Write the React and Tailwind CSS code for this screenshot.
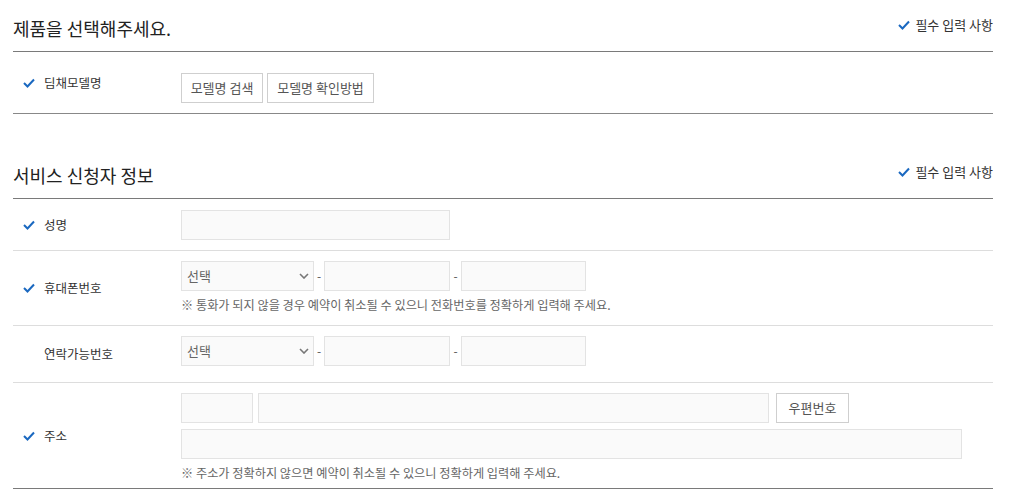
const FONT = { fontFamily: '"Noto Sans CJK KR", "Noto Sans", sans-serif' }

function Check({ className = '' }) {
  return (
    <svg viewBox="0 0 12 10" className={`h-[10px] w-[12px] ${className}`}>
      <polyline points="1,5 4.5,8.5 11,1.5" fill="none" stroke="#1a68c0" strokeWidth="2" />
    </svg>
  )
}

function SectionHeader({ title }) {
  return (
    <div className="flex h-[52px] items-center justify-between border-b border-[#7a7a7a]">
      <h2 className="pt-[4px] text-[18px] leading-[24px] text-[#222]">{title}</h2>
      <p className="flex items-center gap-[5px] pb-[2px] text-[13px] leading-[16px] text-[#333]">
        <Check />
        필수 입력 사항
      </p>
    </div>
  )
}

function Label({ required, children }) {
  return (
    <div className="flex w-[168px] shrink-0 items-center pl-[10px] text-[12.5px] leading-[16px] text-[#333]">
      <span className="w-[21px]">{required && <Check />}</span>
      {children}
    </div>
  )
}

function Input({ className = '' }) {
  return <input className={`h-[30px] border border-[#e3e3e3] bg-[#fafafa] px-2 text-[12px] outline-none ${className}`} />
}

function Select() {
  return (
    <div className="relative h-[30px] w-[133px]">
      <select className="h-full w-full appearance-none border border-[#e3e3e3] bg-[#fafafa] pl-[5px] text-[13px] text-[#666] outline-none">
        <option>선택</option>
      </select>
      <svg viewBox="0 0 10 6" className="pointer-events-none absolute right-[5px] top-[12px] h-[6px] w-[10px]">
        <polyline points="1,1 5,5 9,1" fill="none" stroke="#777" strokeWidth="1.6" />
      </svg>
    </div>
  )
}

function Phone() {
  return (
    <div className="flex items-center">
      <Select />
      <span className="w-[10px] text-center text-[12px] text-[#555]">-</span>
      <Input className="w-[126px]" />
      <span className="w-[11px] text-center text-[12px] text-[#555]">-</span>
      <Input className="w-[125px]" />
    </div>
  )
}

function Note({ children }) {
  return <p className="mt-[6px] text-[12.2px] leading-[16px] text-[#666]">{children}</p>
}

function Button({ children, className = '' }) {
  return (
    <button className={`h-[30px] border border-[#cfcfcf] bg-white text-[13px] text-[#555] ${className}`}>{children}</button>
  )
}

export default function App() {
  return (
    <div style={FONT} className="min-h-[497px] bg-white px-[13px] pr-[16px]">
      <SectionHeader title="제품을 선택해주세요." />
      <div className="flex h-[62px] items-center border-b border-[#888]">
        <Label required>딤채모델명</Label>
        <div className="flex items-center gap-[4px] pt-[11px]">
          <Button className="w-[82px]">모델명 검색</Button>
          <Button className="w-[107px]">모델명 확인방법</Button>
        </div>
      </div>

      <div className="mt-[33px]">
        <SectionHeader title="서비스 신청자 정보" />
        <div className="flex h-[52px] items-center border-b border-[#ddd]">
          <Label required>성명</Label>
          <Input className="w-[269px]" />
        </div>
        <div className="flex h-[75px] items-center border-b border-[#ddd]">
          <Label required>휴대폰번호</Label>
          <div className="self-start pt-[10px]">
            <Phone />
            <Note>※ 통화가 되지 않을 경우 예약이 취소될 수 있으니 전화번호를 정확하게 입력해 주세요.</Note>
          </div>
        </div>
        <div className="flex h-[57px] items-center border-b border-[#ddd]">
          <Label>연락가능번호</Label>
          <div className="self-start pt-[10px]">
            <Phone />
          </div>
        </div>
        <div className="flex h-[106px] items-center border-b border-[#7a7a7a]">
          <Label required>주소</Label>
          <div className="self-start pt-[10px]">
            <div className="flex items-center">
              <Input className="w-[72px]" />
              <Input className="ml-[5px] w-[511px]" />
              <Button className="ml-[7px] w-[73px]">우편번호</Button>
            </div>
            <Input className="mt-[6px] w-[781px]" />
            <Note>※ 주소가 정확하지 않으면 예약이 취소될 수 있으니 정확하게 입력해 주세요.</Note>
          </div>
        </div>
      </div>
    </div>
  )
}
